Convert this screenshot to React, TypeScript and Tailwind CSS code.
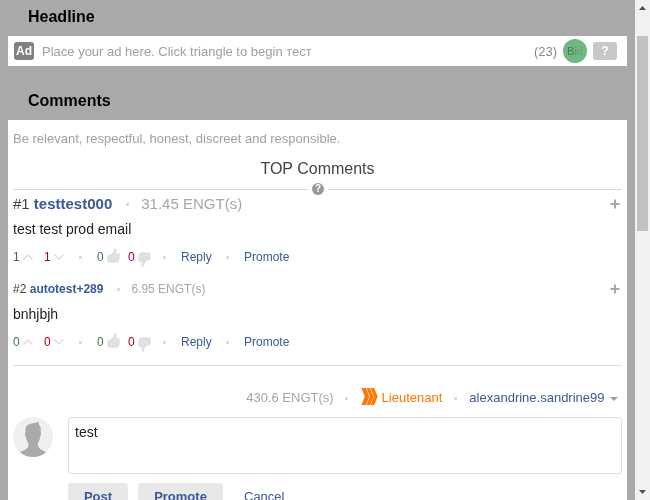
import React from "react";

function Dot({ className = "" }: { className?: string }) {
  return (
    <span className={`shrink-0 pt-px ${className}`}>
      <span className="block size-[3px] rounded-[1px] bg-[#d8d8d8]" />
    </span>
  );
}

function Caret({ down = false }: { down?: boolean }) {
  return (
    <svg width="10" height="6" viewBox="0 0 10 6" className="shrink-0" fill="none" stroke="#dedede" strokeWidth="1.5">
      <path d={down ? "M.5.5 5 5 9.500.5" : "M.5 5.500 5 1 9.500 5.500"} />
    </svg>
  );
}

function Thumb({ down = false }: { down?: boolean }) {
  return (
    <svg width="13" height="15" viewBox="0 0 13 15" className={`shrink-0 ${down ? "mt-[4px] -scale-y-100 -scale-x-100" : "-mt-[3px]"}`} fill="#e0e0e0">
      <path d="M.3 7.400C2 6.900 3.200 6.600 4.200 5.900 5.700 4.700 6.700 3.200 6.900 1.200 7.100 0 9.200-.2 9.700 1.500 10 2.800 9.500 4.200 9.200 5.300H11.900C13 5.400 13.200 6.800 12.500 7.400 13.100 8 13 9.300 12.400 9.800 12.900 10.500 12.600 11.700 12 12.100 12.200 13.200 11.600 14.200 10.500 14.400 7.500 15 3.500 14.900.8 14.200.1 12 0 9.500.3 7.400Z" />
    </svg>
  );
}

function Actions({ up, down }: { up: number; down: number }) {
  return (
    <div className="flex h-[18px] items-center text-[12px] leading-[18px] text-[#3b5998]">
      <span className="w-[10px] text-[#3c763d]">{up}</span>
      <span className="w-[21px]"><Caret /></span>
      <span className="w-[10px] text-[#a80010]">{down}</span>
      <span className="w-[25px]"><Caret down /></span>
      <Dot className="w-[18px]" />
      <span className="w-[10px] text-[#3c763d]">0</span>
      <span className="w-[21px]"><Thumb /></span>
      <span className="w-[10px] text-[#a80010]">0</span>
      <span className="w-[25px]"><Thumb down /></span>
      <Dot className="w-[18px]" />
      <span className="w-[45px]">Reply</span>
      <Dot className="w-[18px]" />
      <span>Promote</span>
    </div>
  );
}

function Plus() {
  return (
    <svg width="10" height="10" viewBox="0 0 10 10" className="mr-[2px] ml-auto" fill="#a6a6a6">
      <path d="M4 .5h2V4h3.500v2H6v3.500H4V6H.5V4H4z" />
    </svg>
  );
}

type CommentProps = {
  rank: number;
  name: string;
  amount: string;
  text: string;
  up: number;
  down: number;
  large?: boolean;
};

function Comment({ rank, name, amount, text, up, down, large = false }: CommentProps) {
  return (
    <article className="flex h-[85px] flex-col">
      <div className={`flex h-[18px] items-center leading-[18px] ${large ? "text-[15px]" : "text-[12px]"}`}>
        <span className="whitespace-pre text-[#404040]">
          #{rank} <b className="text-[#3b5998]">{name}</b>
        </span>
        <Dot className={large ? "ml-[14px] w-[15px]" : "ml-[14px] w-[14px]"} />
        <span className="text-[#a6a6a6]">{amount} ENGT(s)</span>
        <Plus />
      </div>
      <p className="mt-[7px] mb-[10px] text-[14px] leading-[18px] text-[#222]">{text}</p>
      <Actions up={up} down={down} />
    </article>
  );
}

function RankIcon() {
  return (
    <svg width="17" height="17" viewBox="0 0 17 17" className="-mt-[3px] shrink-0" fill="#ff7800">
      <path d="M.5 0H5l3.200 8.500L5 17H.5l3.200-8.500z" />
      <path d="M5.600 0H9l3.300 8.500L9 17H5.600l3.200-8.500z" />
      <path d="M9.700 0h3.400l3.600 8.500-3.600 8.500H9.700l3.200-8.500z" />
    </svg>
  );
}

function Avatar() {
  return (
    <svg width="40" height="40" viewBox="0 0 40 40" className="mr-[15px] shrink-0">
      <defs>
        <clipPath id="avatar"><circle cx="20" cy="20" r="20" /></clipPath>
      </defs>
      <g clipPath="url(#avatar)">
        <path fill="#f0f0f0" d="M0 0h40v40H0z" />
        <path fill="#aaa" d="M12.500 12C12.500 8 16 7 19 6.500 22 6.100 24 5.600 25.400 4.600L26.200 8C28 10 28 12 27.700 15 28.400 16.200 28 18.500 27.300 19.500 27 22 26 24 25 26 24.500 29.500 26 31.700 29 33L34 35.500V40H6V35.500L11.500 33C14.500 31.700 16 29 15.200 26 14 24 13 22 12.700 19.500 11.500 18 11.700 16 12.500 15Z" />
      </g>
    </svg>
  );
}

function Scrollbar() {
  return (
    <aside className="flex h-full w-[15px] flex-col items-center bg-[#f1f1f1]">
      <svg width="7" height="4" viewBox="0 0 7 4" className="mt-[6px]" fill="#505050"><path d="M0 4 3.500 0 7 4z" /></svg>
      <div className="mt-[26px] h-[195px] w-[11px] bg-[#c1c1c1]" />
      <svg width="7" height="4" viewBox="0 0 7 4" className="mt-auto mb-[6px]" fill="#505050"><path d="M0 0h7L3.500 4z" /></svg>
    </aside>
  );
}

export default function App() {
  return (
    <div className="flex h-[500px] w-[650px] overflow-hidden bg-[#a9a9a9] font-['Liberation_Sans',Arial,sans-serif]">
      <main className="w-[635px] px-2 will-change-transform">
        <h2 className="h-9 pl-5 pt-[7px] text-[16px] leading-[20px] font-bold text-black">Headline</h2>
        <section className="flex h-[30px] items-center bg-white pr-[10px] pl-[6px] text-[13px]">
          <span className="mr-2 h-[18px] w-5 rounded-[3px] bg-[#808080] text-center text-[12px] leading-[18px] font-bold text-white">Ad</span>
          <span className="pt-px text-[#a0a0a0]">Place your ad here. Click triangle to begin тест</span>
          <span className="mr-[6px] ml-auto pt-px text-[#888]">(23)</span>
          <span className="mr-[6px] flex size-6 items-center justify-center rounded-full bg-[#6cba80] text-[11px]">
            <span className="text-[#56705b]">B<span className="text-[#68856e]">i</span><span className="text-[#7d9883]">d</span></span>
          </span>
          <span className="h-[18px] w-6 rounded-[3px] bg-[#c8c8c8] text-center text-[12px] leading-[18px] font-bold text-white">?</span>
        </section>
        <h2 className="h-[54px] pt-[25px] pl-5 text-[16px] leading-[20px] font-bold text-black">Comments</h2>
        <section className="h-[400px] bg-white px-[5px] pt-[10px]">
          <p className="text-[13px] leading-[18px] text-[#a0a0a0]">Be relevant, respectful, honest, discreet and responsible.</p>
          <h3 className="mt-[11px] text-center text-[16px] leading-[20px] text-[#444]">TOP Comments</h3>
          <div className="mt-[4px] flex h-3 items-center">
            <div className="mt-px h-px w-[295px] bg-[#d8d8d8]" />
            <span className="mx-1 size-3 rounded-full bg-[#999] text-center text-[10px] leading-[12px] font-bold text-white">?</span>
            <div className="mt-px h-px flex-1 bg-[#d8d8d8]" />
          </div>
          <Comment rank={1} name="testtest000" amount="31.45" text="test test prod email" up={1} down={1} large />
          <Comment rank={2} name="autotest+289" amount="6.95" text="bnhjbjh" up={0} down={0} />
          <div className="h-px bg-[#e0e0e0]" />
          <div className="mt-[23px] flex h-[18px] items-center justify-end pr-[4px] text-[13px] leading-[18px]">
            <span className="text-[#a6a6a6]">430.6 ENGT(s)</span>
            <Dot className="ml-[11px] w-[16px]" />
            <RankIcon />
            <span className="ml-1 text-[#ff7800]">Lieutenant</span>
            <Dot className="ml-[12px] w-[15px]" />
            <span className="text-[#3b5998]">alexandrine.sandrine99</span>
            <svg width="8" height="4" viewBox="0 0 8 4" className="mt-[2px] ml-[5.5px]" fill="#a0a0a0"><path d="M0 0h8L4 4z" /></svg>
          </div>
          <div className="mt-[10px] flex">
            <Avatar />
            <div className="flex-1">
              <div className="h-[57px] rounded-[3px] border border-[#dedede] px-[6px] pt-[5px] text-[14px] leading-[18px] text-[#222]">test</div>
              <div className="mt-[9px] flex text-[13px] leading-[27px] text-[#3b5998]">
                <span className="mr-[10px] h-[27px] w-[60px] rounded-[3px] bg-[#e8e8e8] text-center font-bold">Post</span>
                <span className="mr-[21px] h-[27px] w-[85px] rounded-[3px] bg-[#e8e8e8] text-center font-bold">Promote</span>
                <span>Cancel</span>
              </div>
            </div>
          </div>
        </section>
      </main>
      <Scrollbar />
    </div>
  );
}
